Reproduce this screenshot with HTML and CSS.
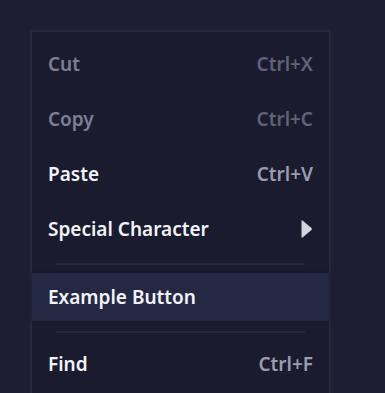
FILE: index.html
```html
<!DOCTYPE html>
<html lang="en">

<head>
    <meta charset="UTF-8">
    <link rel="stylesheet" href="styles.css">
    <title>Context Menu</title>
</head>

<body>
    <div class="menu">
        <div class="menu-item disabled">
            <span class="label">Cut</span>
            <span class="shortcut">Ctrl+X</span>
        </div>
        <div class="menu-item disabled">
            <span class="label">Copy</span>
            <span class="shortcut">Ctrl+C</span>
        </div>
        <div class="menu-item">
            <span class="label">Paste</span>
            <span class="shortcut">Ctrl+V</span>
        </div>
        <div class="menu-item">
            <span class="label">Special Character</span>
            <svg class="arrow" width="12" height="20" viewBox="0 0 12 20">
                <path d="M1.5 1.5 L10.5 9 Q11.5 10 10.5 11 L1.5 18.5 Q0.5 19 0.5 18 L0.5 2 Q0.5 1 1.5 1.5 Z" />
            </svg>
        </div>
        <div class="separator"></div>
        <div class="menu-item active">
            <span class="label">Example Button</span>
        </div>
        <div class="separator"></div>
        <div class="menu-item last">
            <span class="label">Find</span>
            <span class="shortcut">Ctrl+F</span>
        </div>
    </div>
</body>

</html>
```

FILE: styles.css
```css
body {
    margin: 0;
    background-color: #1d1e33;
    font-family: "Noto Sans", "Open Sans", sans-serif;
    overflow: hidden;
    height: 393px;
}

.menu {
    margin: 30px 0 0 30px;
    width: 297px;
    background-color: #1a1b2e;
    border: 2px solid #26283e;
    border-bottom: none;
    padding-top: 4px;
    height: 400px;
}

.menu-item {
    display: flex;
    align-items: center;
    justify-content: space-between;
    height: 55px;
    padding: 0 16px;
    font-size: 19px;
    font-weight: 600;
    color: #f2f3f8;
}

.menu-item.disabled {
    color: #7c7f96;
}

.shortcut {
    color: #9a9cb0;
}

.menu-item.disabled .shortcut {
    color: #5f6279;
}

.arrow {
    fill: #d2d4de;
}

.menu-item.active {
    height: 48px;
    background-color: #252843;
    box-shadow: 0 0 3px #14152a;
}

.separator {
    height: 2px;
    margin: 7px 24px 8px;
    background-color: #25273c;
}

.menu-item.active + .separator {
    margin: 10px 24px 3px;
}
```
